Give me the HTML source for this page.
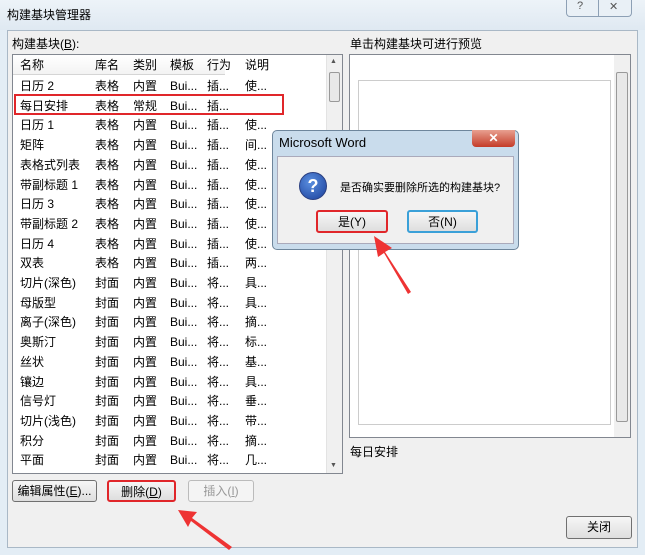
<!DOCTYPE html>
<html><head><meta charset="utf-8"><style>
*{box-sizing:border-box;margin:0;padding:0}
body{width:645px;height:555px;background:#e3edf5;font-family:"Liberation Sans","Noto Sans CJK SC",sans-serif;font-size:12px;color:#000;position:relative;overflow:hidden}
.a{position:absolute}
.btn{position:absolute;border:1px solid #707070;border-radius:3px;background:linear-gradient(#f6f6f6,#dedede);text-align:center;line-height:20px;font-size:12px}
.row{position:absolute;left:0;height:20px;line-height:20px;width:315px}
.row span{position:absolute}
</style></head><body>
<div class="a" style="left:0;top:0;width:645px;height:30px;background:linear-gradient(#edf3f8,#dfe9f2)"></div>
<div class="a" style="left:7px;top:6px;font-size:12px">构建基块管理器</div>
<div class="a" style="left:566px;top:0;width:66px;height:17px;border:1px solid #8da0b5;border-top:none;border-radius:0 0 4px 4px;background:#e9f0f6"></div>
<div class="a" style="left:598px;top:0;width:1px;height:17px;background:#8da0b5"></div>
<div class="a" style="left:577px;top:0;font-size:11px;color:#555">?</div>
<div class="a" style="left:609px;top:0;font-size:11px;color:#555">✕</div>
<div class="a" style="left:7px;top:30px;width:631px;height:518px;background:#f0f0f0;border:1px solid #a9b8c6"></div>
<div class="a" style="left:12px;top:35px">构建基块(<u>B</u>):</div>
<div class="a" style="left:350px;top:35px">单击构建基块可进行预览</div>
<div class="a" style="left:12px;top:54px;width:331px;height:420px;background:#fff;border:1px solid #828790"></div>
<div class="a" style="left:13px;top:55px;width:212px;height:20px;background:linear-gradient(#fff,#f3f3f3);border-bottom:1px solid #d5d5d5"></div>
<div class="a" style="left:326px;top:55px;width:16px;height:418px;background:#f0f0f0;border-left:1px solid #e3e3e3"></div>
<div class="a" style="left:329px;top:72px;width:11px;height:30px;border:1px solid #999;border-radius:2px;background:#e8e8e8"></div>
<div class="a" style="left:330px;top:58px;font-size:7px;color:#555">▲</div>
<div class="a" style="left:330px;top:462px;font-size:7px;color:#555">▼</div>
<div class="a" style="left:13px;top:55px;width:312px;height:418px">
<div class="row" style="top:0"><span style="left:7px">名称</span><span style="left:82px">库名</span><span style="left:120px">类别</span><span style="left:157px">模板</span><span style="left:194px">行为</span><span style="left:232px">说明</span></div>
<div id="rows"></div>
</div>
<div class="a" style="left:14px;top:94px;width:270px;height:21px;border:2px solid #e0262a"></div>
<div class="a" style="left:349px;top:54px;width:282px;height:384px;background:#fff;border:1px solid #828790"></div>
<div class="a" style="left:614px;top:55px;width:16px;height:382px;background:#f0f0f0"></div>
<div class="a" style="left:616px;top:72px;width:12px;height:350px;border:1px solid #999;border-radius:2px;background:#e8e8e8"></div>
<div class="a" style="left:358px;top:80px;width:253px;height:345px;border:1px solid #ccc"></div>
<div class="a" style="left:350px;top:443px">每日安排</div>
<div class="btn" style="left:12px;top:480px;width:85px;height:22px">编辑属性(<u>E</u>)...</div>
<div class="btn" style="left:107px;top:480px;width:69px;height:22px;border:2px solid #e0262a">删除(<u>D</u>)</div>
<div class="btn" style="left:188px;top:480px;width:66px;height:22px;color:#999;border-color:#bbb;background:#f4f4f4">插入(<u>I</u>)</div>
<div class="btn" style="left:566px;top:516px;width:66px;height:23px">关闭</div>
<!-- dialog -->
<div class="a" style="left:272px;top:130px;width:247px;height:120px;background:#c9dcec;border:1px solid #6e869c;border-radius:5px"></div>
<div class="a" style="left:279px;top:135px;font-size:13px">Microsoft Word</div>
<div class="a" style="left:472px;top:130px;width:43px;height:17px;background:linear-gradient(#e8a090,#c43b28);border-radius:0 0 4px 4px;color:#fff;text-align:center;font-weight:bold;line-height:16px">✕</div>
<div class="a" style="left:277px;top:156px;width:237px;height:88px;background:#f0f0f0;border:1px solid #aab"></div>
<div class="a" style="left:299px;top:172px;width:28px;height:28px;border-radius:50%;background:radial-gradient(circle at 40% 35%,#5a8fe0,#1a3f9a);border:1px solid #2a3f80;color:#fff;text-align:center;line-height:26px;font-weight:bold;font-size:18px">?</div>
<div class="a" style="left:340px;top:179px;font-size:11px;white-space:nowrap">是否确实要删除所选的构建基块?</div>
<div class="btn" style="left:316px;top:210px;width:72px;height:23px;border:2px solid #e0262a">是(Y)</div>
<div class="btn" style="left:407px;top:210px;width:71px;height:23px;border:2px solid #3aa0d8">否(N)</div>
<svg class="a" style="left:0;top:0" width="645" height="555">
<path d="M411 292 L385 252 L392 248 L374 236 L378 257 L384 253 L408 294Z" fill="#e33"/>
<path d="M232 547 L192 518 L197 512 L178 510 L188 527 L191 521 L229 550Z" fill="#e33"/>
</svg>
<script>
var d=[["日历 2","表格","内置","Bui...","插...","使..."],["每日安排","表格","常规","Bui...","插...",""],["日历 1","表格","内置","Bui...","插...","使..."],["矩阵","表格","内置","Bui...","插...","间..."],["表格式列表","表格","内置","Bui...","插...","使..."],["带副标题 1","表格","内置","Bui...","插...","使..."],["日历 3","表格","内置","Bui...","插...","使..."],["带副标题 2","表格","内置","Bui...","插...","使..."],["日历 4","表格","内置","Bui...","插...","使..."],["双表","表格","内置","Bui...","插...","两..."],["切片(深色)","封面","内置","Bui...","将...","具..."],["母版型","封面","内置","Bui...","将...","具..."],["离子(深色)","封面","内置","Bui...","将...","摘..."],["奥斯汀","封面","内置","Bui...","将...","标..."],["丝状","封面","内置","Bui...","将...","基..."],["镶边","封面","内置","Bui...","将...","具..."],["信号灯","封面","内置","Bui...","将...","垂..."],["切片(浅色)","封面","内置","Bui...","将...","带..."],["积分","封面","内置","Bui...","将...","摘..."],["平面","封面","内置","Bui...","将...","几..."]];
var L=[7,82,120,157,194,232],h="";
d.forEach(function(r,i){h+='<div class="row" style="top:'+(21+i*19.7)+'px">';r.forEach(function(c,j){h+='<span style="left:'+L[j]+'px">'+c+'</span>'});h+='</div>'});
document.getElementById("rows").innerHTML=h;
</script>
</body></html>
